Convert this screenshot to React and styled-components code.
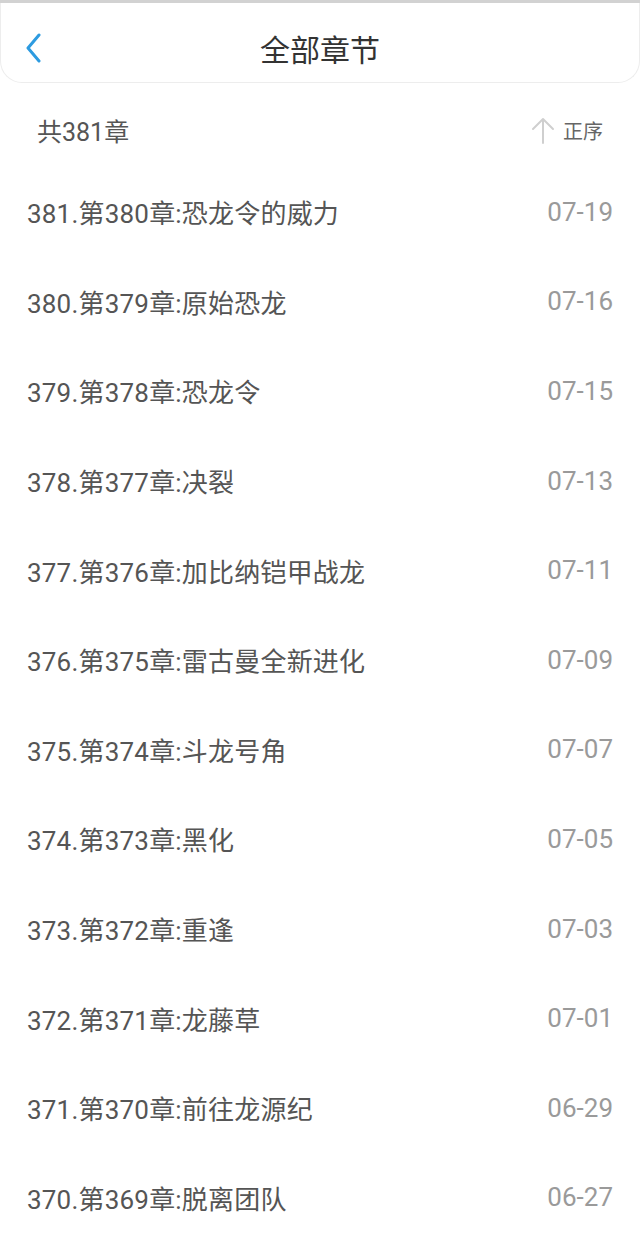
import styled, { createGlobalStyle } from 'styled-components'

const chapters = [
    { title: '381.第380章:恐龙令的威力', date: '07-19' },
    { title: '380.第379章:原始恐龙', date: '07-16' },
    { title: '379.第378章:恐龙令', date: '07-15' },
    { title: '378.第377章:决裂', date: '07-13' },
    { title: '377.第376章:加比纳铠甲战龙', date: '07-11' },
    { title: '376.第375章:雷古曼全新进化', date: '07-09' },
    { title: '375.第374章:斗龙号角', date: '07-07' },
    { title: '374.第373章:黑化', date: '07-05' },
    { title: '373.第372章:重逢', date: '07-03' },
    { title: '372.第371章:龙藤草', date: '07-01' },
    { title: '371.第370章:前往龙源纪', date: '06-29' },
    { title: '370.第369章:脱离团队', date: '06-27' },
]

const GlobalStyle = createGlobalStyle`
body {
    margin: 0;
    background: #fff;
    font-family: Roboto, "Noto Sans CJK SC", sans-serif;
}
`

function App() {
    return (
        <Page>
            <GlobalStyle />
            <Header>
                <BackButton aria-label="返回">
                    <svg width="18" height="30" viewBox="0 0 18 30" fill="none">
                        <path d="M14 2 L3 15 L14 28" stroke="#2d9be0" strokeWidth="3" strokeLinecap="round" strokeLinejoin="round" />
                    </svg>
                </BackButton>
                <Title>全部章节</Title>
            </Header>

            <Summary>
                <Count>共381章</Count>
                <Sort>
                    <svg width="24" height="28" viewBox="0 0 24 28" fill="none">
                        <path d="M12 3 V27 M2 13 L12 3 L22 13" stroke="#cfcfcf" strokeWidth="2" strokeLinecap="round" strokeLinejoin="round" />
                    </svg>
                    <SortLabel>正序</SortLabel>
                </Sort>
            </Summary>

            <List>
                {chapters.map((item, index) => (
                    <Row key={index}>
                        <ChapterName>{item.title}</ChapterName>
                        <ChapterDate>{item.date}</ChapterDate>
                    </Row>
                ))}
            </List>
        </Page>
    )
}

const Page = styled.div`
width: 640px;
min-height: 1236px;
background: #fff;
border-top: 3px solid #d2d2d2;
box-sizing: border-box;
`

const Header = styled.header`
position: relative;
height: 80px;
padding-top: 10px;
display: flex;
align-items: center;
justify-content: center;
border: 1px solid #ededed;
border-top: none;
border-radius: 0 0 22px 22px;
box-sizing: border-box;
`

const BackButton = styled.button`
position: absolute;
left: 24px;
top: 50%;
transform: translateY(-50%);
margin-top: 5px;
padding: 0;
border: none;
background: none;
display: flex;
`

const Title = styled.h1`
margin: 0;
font-size: 30px;
font-weight: 400;
color: #333;
`

const Summary = styled.div`
height: 84px;
display: flex;
align-items: center;
justify-content: space-between;
padding: 10px 35px 0 37px;
box-sizing: border-box;
`

const Count = styled.span`
font-size: 25px;
color: #555;
`

const Sort = styled.div`
display: flex;
align-items: center;
gap: 8px;
margin-right: 2px;
`

const SortLabel = styled.span`
font-size: 20px;
color: #666;
`

const List = styled.ul`
list-style: none;
margin: 0;
padding: 0;
`

const Row = styled.li`
height: 89.6px;
display: flex;
align-items: center;
justify-content: space-between;
padding: 0 27px 0 27px;
`

const ChapterName = styled.span`
font-size: 26px;
letter-spacing: 0.2px;
color: #555;
`

const ChapterDate = styled.span`
font-size: 26px;
color: #9a9a9a;
`

export default App
